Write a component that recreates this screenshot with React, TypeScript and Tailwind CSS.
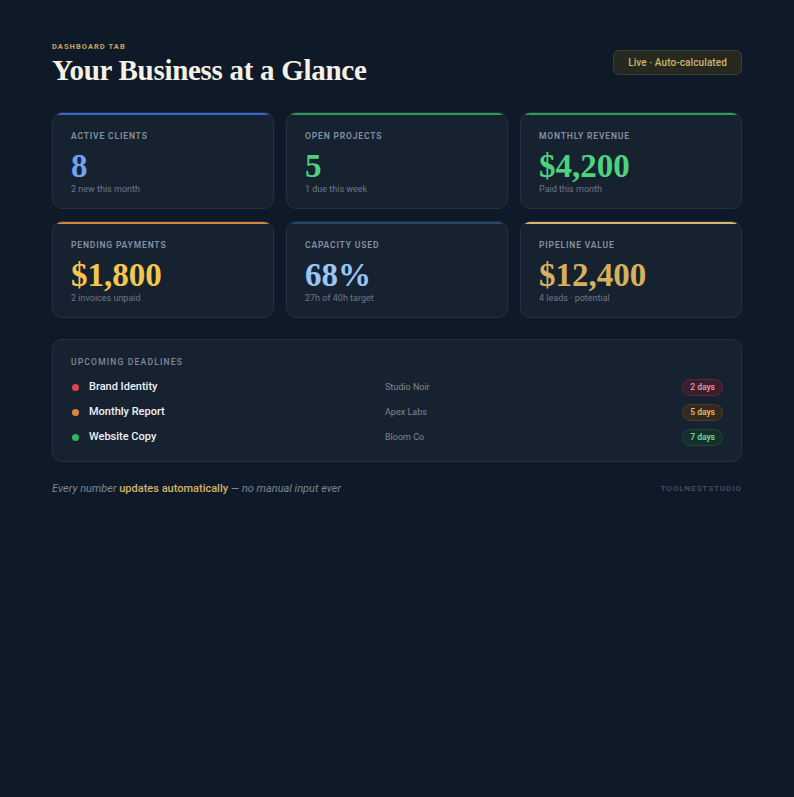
const serif = { fontFamily: '"Liberation Serif", "Times New Roman", serif' };

type Stat = {
    label: string;
    value: string;
    sub: string;
    bar: string;
    color: string;
};

const stats: Stat[] = [
    { label: 'Active Clients', value: '8', sub: '2 new this month', bar: 'bg-[#3a67d6]', color: 'text-[#6ea2f2]' },
    { label: 'Open Projects', value: '5', sub: '1 due this week', bar: 'bg-[#2e9e57]', color: 'text-[#4fd27f]' },
    { label: 'Monthly Revenue', value: '$4,200', sub: 'Paid this month', bar: 'bg-[#2e9e57]', color: 'text-[#4fd27f]' },
    { label: 'Pending Payments', value: '$1,800', sub: '2 invoices unpaid', bar: 'bg-[#d8843a]', color: 'text-[#f4c64e]' },
    { label: 'Capacity Used', value: '68%', sub: '27h of 40h target', bar: 'bg-[#1f4a70]', color: 'text-[#98c6f8]' },
    { label: 'Pipeline Value', value: '$12,400', sub: '4 leads · potential', bar: 'bg-[#d8b46a]', color: 'text-[#d6b05c]' },
];

const deadlines = [
    { name: 'Brand Identity', client: 'Studio Noir', days: '2 days', dot: 'bg-[#e0424f]', badge: 'bg-[#3a1e2a] border-[#5a2a38] text-[#f19aa6]' },
    { name: 'Monthly Report', client: 'Apex Labs', days: '5 days', dot: 'bg-[#de8636]', badge: 'bg-[#33291e] border-[#4d3c26] text-[#f0c35c]' },
    { name: 'Website Copy', client: 'Bloom Co', days: '7 days', dot: 'bg-[#2fb45a]', badge: 'bg-[#15302a] border-[#21473a] text-[#7ee0a4]' },
];

const StatCard = ({ stat }: { stat: Stat }) => (
    <div className="relative h-[97px] rounded-[10px] border border-[#243142] bg-[#172230] overflow-hidden px-[18px] pt-[17px]">
        {/* Accent bar */}
        <div className={`absolute left-[4px] right-[4px] top-0 h-[2px] rounded-full ${stat.bar}`} />
        <p className="text-[8.5px] font-semibold uppercase tracking-[0.1em] text-[#8592a3]">{stat.label}</p>
        <p className={`mt-[7px] text-[33px] font-bold leading-[32px] ${stat.color}`} style={serif}>
            {stat.value}
        </p>
        <p className="mt-[1px] text-[9px] text-[#6b7889]">{stat.sub}</p>
    </div>
);

const App = () => {
    return (
        <div
            className="min-h-[797px] w-full bg-[#0f1a28] px-[52px] pt-[41px]"
            style={{ fontFamily: 'Roboto, Inter, sans-serif' }}
        >
            {/* Header */}
            <div className="flex items-start justify-between">
                <div>
                    <p className="text-[7.5px] font-bold uppercase tracking-[0.14em] text-[#c9a55c]">Dashboard Tab</p>
                    <h1 className="mt-[2px] text-[29px] font-bold leading-[32px] text-[#f5f1e8] tracking-[-0.01em]" style={serif}>
                        Your Business at a Glance
                    </h1>
                </div>
                <div className="mt-[9px] flex h-[25px] items-center rounded-[6px] border border-[#3d3d33] bg-[#26291f] px-[14px] text-[10px] font-medium tracking-[0.01em] text-[#d4b46a]">
                    Live · Auto-calculated
                </div>
            </div>

            {/* Stat cards */}
            <div className="mt-[26px] grid grid-cols-3 gap-[12px]">
                {stats.map((s) => (
                    <StatCard key={s.label} stat={s} />
                ))}
            </div>

            {/* Deadlines */}
            <div className="mt-[21px] rounded-[10px] border border-[#243142] bg-[#172230] px-[18px] pt-[16px] pb-[11px]">
                <p className="text-[8.5px] font-medium uppercase tracking-[0.14em] text-[#7d8a9b]">Upcoming Deadlines</p>
                <div className="mt-[6px] flex flex-col">
                    {deadlines.map((d) => (
                        <div key={d.name} className="flex h-[25px] items-center">
                            <span className={`ml-[1px] h-[7px] w-[7px] rounded-full ${d.dot}`} />
                            <span className="ml-[10px] w-[296px] text-[11px] font-medium text-[#eef1f5]">{d.name}</span>
                            <span className="flex-1 text-[9px] text-[#7d8897]">{d.client}</span>
                            <span className={`flex h-[17px] items-center rounded-full border px-[7px] text-[8.5px] font-medium ${d.badge}`}>
                                {d.days}
                            </span>
                        </div>
                    ))}
                </div>
            </div>

            {/* Footer */}
            <div className="mt-[19px] flex items-center justify-between">
                <p className="text-[11px] italic text-[#7b8594]">
                    Every number <span className="font-medium not-italic text-[#d4b46a]">updates automatically</span> — no manual input ever
                </p>
                <p className="text-[8px] font-medium uppercase tracking-[0.12em] text-[#4a5361]">ToolNestStudio</p>
            </div>
        </div>
    );
};

export default App;
